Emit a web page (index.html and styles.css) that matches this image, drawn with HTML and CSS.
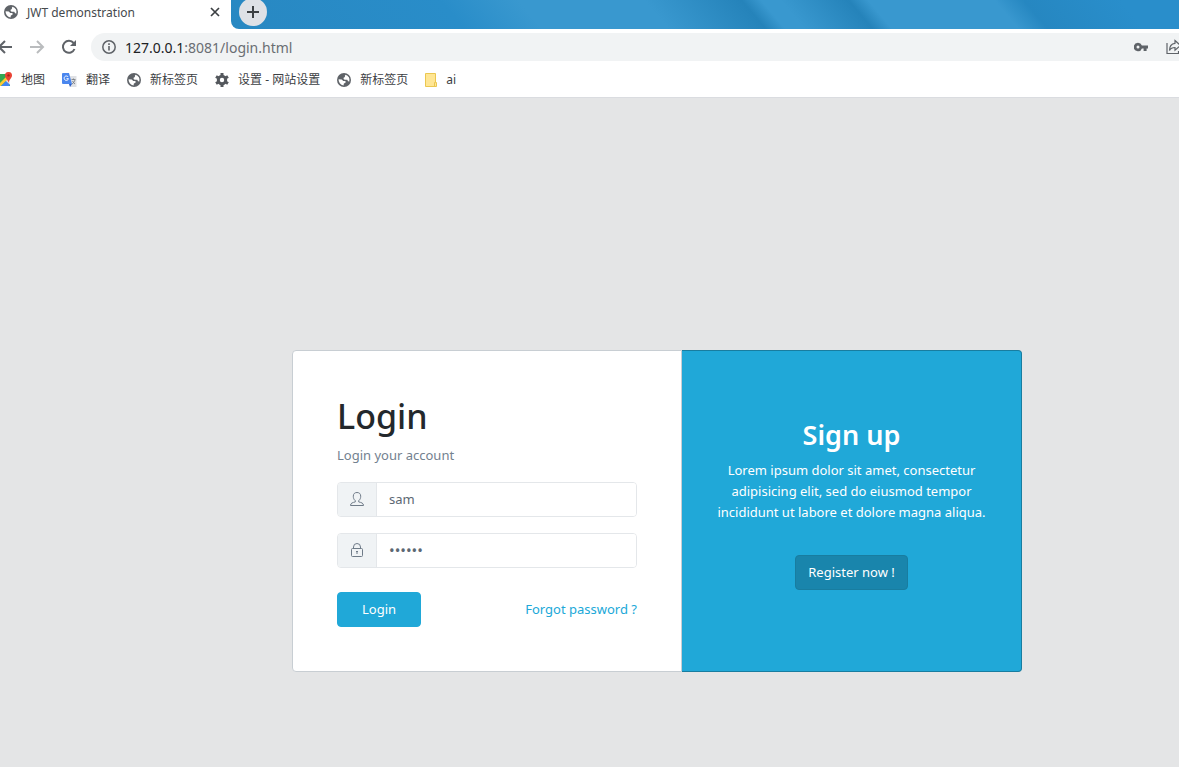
FILE: index.html
```html
<!DOCTYPE html>
<html lang="en">
<head>
<meta charset="utf-8">
<title>JWT demonstration</title>
<link rel="stylesheet" href="styles.css">
</head>
<body>
<svg class="defs" aria-hidden="true">
  <symbol id="globe" viewBox="0 0 14 14">
    <circle cx="7" cy="7" r="7" fill="#5f6368"/>
    <path d="M8.500 1.700A5.500 5.500 0 0 1 12.300 8.600L11 8.300 10.300 6.800H7.700L6.600 5.900V4.700L7.900 4V2.700zM1.600 6.300 4.800 6.500 6.200 8H8.500V9.700L6.900 10.500 6.500 12.400A5.500 5.500 0 0 1 1.600 6.300z" fill="#fff"/>
  </symbol>
</svg>
<header class="browser">
  <div class="tabs">
    <div class="tab">
      <svg class="icon14"><use href="#globe"/></svg>
      <span class="tab-title">JWT demonstration</span>
      <button class="plain" aria-label="Close tab"><svg width="10" height="10" viewBox="0 0 10 10"><path d="M1 1l8 8M9 1L1 9" stroke="#3c4043" stroke-width="1.700"/></svg></button>
    </div>
    <div class="tab-rest">
      <button class="new-tab" aria-label="New tab"><svg width="12" height="12" viewBox="0 0 12 12"><path d="M6 0v12M0 6h12" stroke="#3c4043" stroke-width="2"/></svg></button>
    </div>
  </div>
  <div class="toolbar">
    <nav class="nav-buttons">
      <button class="plain" aria-label="Back"><svg width="16" height="16" viewBox="0 0 16 16"><path d="M15 8H2M8 2 2 8l6 6" fill="none" stroke="#5f6368" stroke-width="2"/></svg></button>
      <button class="plain" aria-label="Forward"><svg width="16" height="16" viewBox="0 0 16 16"><path d="M1 8h13M8 2l6 6-6 6" fill="none" stroke="#babcbe" stroke-width="2"/></svg></button>
      <button class="plain" aria-label="Reload"><svg width="16" height="16" viewBox="0 0 16 16"><path d="M13.500 10A6 6 0 1 1 12.600 4" fill="none" stroke="#5f6368" stroke-width="2"/><path d="M15 1v6H9z" fill="#5f6368"/></svg></button>
    </nav>
    <div class="address">
      <svg width="14" height="14" viewBox="0 0 14 14"><circle cx="7" cy="7" r="6.200" fill="none" stroke="#5f6368" stroke-width="1.500"/><path d="M7 6v4.500M7 3.300v1.600" stroke="#5f6368" stroke-width="1.600"/></svg>
      <span class="url"><b>127.0.0.1</b>:8081/login.html</span>
      <svg width="14" height="10" viewBox="0 0 14 10"><path fill-rule="evenodd" d="M4 .8A4.200 4.200 0 1 0 7.900 6.400H9.600V9h3V6.400H14V3.600H7.900A4.200 4.200 0 0 0 4 .8zM4 3.500a1.500 1.500 0 1 1 0 3 1.500 1.500 0 0 1 0-3z" fill="#5f6368"/></svg>
      <svg class="share" width="16" height="16" viewBox="0 0 16 16"><path d="M1 4v10.500h11.500V12M9 1.500l5.500 5-5.500 4.700V8.500Q5 8.500 3.500 11.500 3.500 4.800 9 4.300z" fill="none" stroke="#5f6368" stroke-width="1.200"/></svg>
    </div>
  </div>
  <nav class="bookmarks" lang="zh-CN">
    <a href="#"><svg class="map" width="15" height="15" viewBox="0 0 15 15"><path d="M0 2h13v12H0z" fill="#34a853"/><path d="m7 8 6-2v7z" fill="#e8eaed"/><path d="M0 14 9 5l2 2-7 7z" fill="#fbc934"/><path d="m5 13 4-4 4 4-1 1H4z" fill="#4285f4"/><path d="M11.500 0A3.400 3.400 0 0 1 15 3.400C15 6.300 12 7 11.500 11 11 7 8 6.300 8 3.400A3.400 3.400 0 0 1 11.500 0z" fill="#ea4335"/><circle cx="11.500" cy="3.400" r="1.200" fill="#a52714"/></svg>地图</a>
    <a href="#"><svg width="15" height="14" viewBox="0 0 15 14"><path d="M5 3h9.500v11H8z" fill="#dfe1e5"/><path d="M1 0h6l3 11H1a1 1 0 0 1-1-1V1a1 1 0 0 1 1-1z" fill="#4a86ee"/><path d="M7 11h3l-2 3z" fill="#2f5fc4"/><path d="M6.200 4A2.200 2.200 0 1 0 6.500 5.700H4.500" fill="none" stroke="#fff" stroke-width="1"/><path d="M9.500 6.500h4M11.500 5.500v1M13 7q-1 3-3 4M10.500 8q1 2 2.500 3" fill="none" stroke="#70757a" stroke-width=".8"/></svg>翻译</a>
    <a href="#"><svg class="icon14"><use href="#globe"/></svg>新标签页</a>
    <a href="#"><svg width="14" height="14" viewBox="0 0 14 14"><circle cx="7" cy="7" r="3.700" fill="none" stroke="#54585d" stroke-width="3"/><path d="M7 0v3M7 11v3M1 3.500l2.500 1.500M10.500 9 13 10.500M1 10.500 3.500 9M10.500 5 13 3.500" stroke="#54585d" stroke-width="3"/></svg>设置 - 网站设置</a>
    <a href="#"><svg class="icon14"><use href="#globe"/></svg>新标签页</a>
    <a href="#"><svg width="12" height="14" viewBox="0 0 12 14"><path d="M.5.5h10v9h1v4H.5z" fill="#ffe694" stroke="#ebc750"/><path d="M9.500 13v-3.500h1" fill="none" stroke="#ebc750"/></svg>ai</a>
  </nav>
</header>
<main class="page">
  <div class="card-group">
    <form class="card login">
      <h1>Login</h1>
      <p class="muted">Login your account</p>
      <div class="field">
        <label for="user" aria-label="Username"><svg width="14" height="14" viewBox="0 0 14 14"><path d="M5.300 8.700C3.800 7.500 3.300 6 3.300 4.200 3.300 1.700 4.800.5 7 .5s3.700 1.200 3.700 3.700c0 1.800-.5 3.300-2 4.500v1.200c2.500.7 4.800 1 4.800 3.600H.5c0-2.600 2.300-2.900 4.800-3.600z" fill="none" stroke="#6f7b88"/></svg></label>
        <input id="user" type="text" value="sam">
      </div>
      <div class="field">
        <label for="pass" aria-label="Password"><svg width="14" height="14" viewBox="0 0 14 14"><rect x="1.500" y="5.500" width="11" height="8" rx="1" fill="none" stroke="#6f7b88"/><path d="M3.500 5.500V4a3.500 3.500 0 0 1 7 0v1.500" fill="none" stroke="#6f7b88"/><path d="M7 8v3M6 8.500h2" stroke="#6f7b88"/></svg></label>
        <input id="pass" type="password" value="secret">
      </div>
      <div class="actions">
        <button class="btn btn-login" type="button">Login</button>
        <a href="#">Forgot password ?</a>
      </div>
    </form>
    <section class="card signup">
      <h2>Sign up</h2>
      <p>Lorem ipsum dolor sit amet, consectetur adipisicing elit, sed do eiusmod tempor incididunt ut labore et dolore magna aliqua.</p>
      <button class="btn btn-register" type="button">Register now !</button>
    </section>
  </div>
</main>
</body>
</html>
```

FILE: styles.css
```css
* { box-sizing: border-box; }
body {
  margin: 0;
  min-height: 100vh;
  display: flex;
  flex-direction: column;
  overflow: hidden;
  background: #e4e5e6;
  color: #23282c;
  font: 13px/21px "Noto Sans", "Open Sans", "Noto Sans CJK SC", sans-serif;
}
.defs { position: absolute; width: 0; height: 0; }
svg { flex: none; display: block; }
.icon14 { width: 14px; height: 14px; }
button { font: inherit; cursor: pointer; }
.plain { padding: 0; border: 0; background: none; }

/* Browser chrome */
.browser { background: #fff; border-bottom: 1px solid #dadce0; }
.tabs { display: flex; height: 29px; }
.tab {
  display: flex;
  align-items: center;
  gap: 9px;
  width: 231px;
  padding: 0 11px 5px 4px;
  font-size: 12px;
  color: #45494d;
}
.tab-title { flex: 1; }
.tab-rest {
  flex: 1;
  padding-left: 8px;
  border-bottom-left-radius: 8px;
  background: linear-gradient(50deg, #2888c2 0%, #298dc9 24%, #3998cf 32%, #3998cf 45%, #2583ba 55%, #3998cf 57%, #3998cf 59%, #2583ba 66%, #3998cf 68%, #3998cf 81%, #2687c1 84%, #298ecb 94%, #298ecb 100%);
}
.new-tab {
  display: grid;
  place-items: center;
  width: 28px;
  height: 28px;
  margin-top: -2px;
  padding: 0;
  border: 0;
  border-radius: 50%;
  background: #dee1e6;
}
.toolbar {
  display: flex;
  align-items: center;
  gap: 14px;
  height: 36px;
}
.nav-buttons { display: flex; gap: 16px; margin-left: -3px; }
.address {
  flex: 1;
  display: flex;
  align-items: center;
  height: 28px;
  padding-left: 11px;
  border-radius: 14px 0 0 14px;
  background: #f1f3f4;
}
.url { flex: 1; margin-left: 9px; font-size: 14px; color: #6a6e73; }
.url b { font-weight: 400; color: #202124; }
.share { margin: 0 -3px 0 18px; }
.bookmarks {
  display: flex;
  align-items: center;
  gap: 17px;
  height: 32px;
  padding-bottom: 3px;
  font-size: 12px;
}
.bookmarks a {
  display: flex;
  align-items: center;
  gap: 9px;
  color: #3c4043;
  text-decoration: none;
  white-space: nowrap;
}
.map { margin-left: -3px; }

/* Login page */
.page {
  flex: 1;
  display: flex;
  align-items: center;
  justify-content: center;
  padding: 156px 0 0 135px;
}
.card-group {
  display: grid;
  grid-template-columns: minmax(0, 39fr) minmax(0, 34fr);
  width: 70%;
  max-width: 730px;
}
.card { border: 1px solid #c8ced3; }
.login {
  padding: 44px;
  border-radius: 4px 0 0 4px;
  background: #fff;
}
h1, h2, p { margin: 0; }
h1 { margin-bottom: 8px; font-size: 34px; line-height: 42px; font-weight: 500; }
.muted { margin-bottom: 16px; color: #73818f; }
.field {
  display: flex;
  height: 35px;
  margin-bottom: 16px;
  border: 1px solid #e4e7ea;
  border-radius: 4px;
  overflow: hidden;
}
.field label {
  display: grid;
  place-items: center;
  width: 39px;
  border-right: 1px solid #e4e7ea;
  background: #f0f3f5;
}
.field input {
  flex: 1;
  min-width: 0;
  padding: 0 12px;
  border: 0;
  outline: 0;
  background: #fff;
  color: #5c6873;
  font: inherit;
}
.field input[type="password"] { font-size: 15px; }
.actions {
  display: flex;
  align-items: center;
  justify-content: space-between;
  margin-top: 24px;
}
.actions a { color: #20a8d8; text-decoration: none; }
.btn {
  height: 35px;
  border: 1px solid #20a8d8;
  border-radius: 4px;
  background: #20a8d8;
  color: #fff;
}
.btn-login { padding: 0 24px; }
.signup {
  padding: 67px 32px 81px;
  border-color: #187da0;
  border-left: 0;
  border-radius: 0 4px 4px 0;
  background: #20a8d8;
  color: #fff;
  text-align: center;
}
h2 { margin-bottom: 8px; font-size: 27px; line-height: 34px; font-weight: 600; }
.btn-register { margin-top: 32px; padding: 0 12px; border-color: #187da0; background: #1985ac; }
```
